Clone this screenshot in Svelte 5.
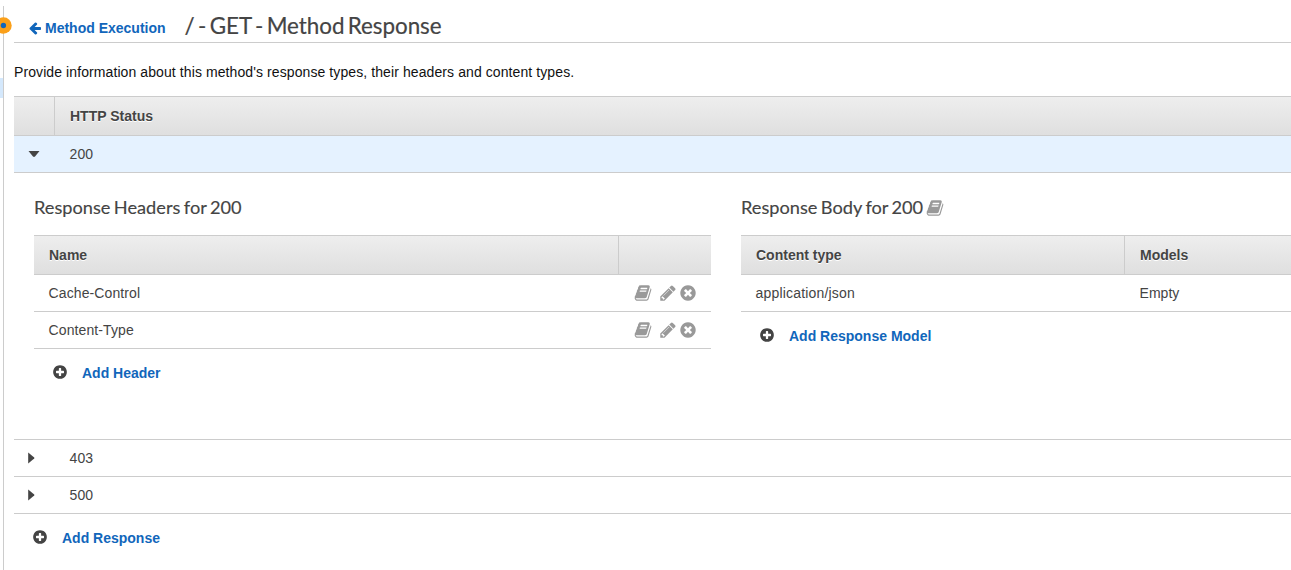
<script>
  const paths = {
    arrow: 'M1664 896v128q0 53-32.5 90.5t-84.5 37.5h-704l293 294q38 36 38 90t-38 90l-75 76q-37 37-90 37-52 0-91-37l-651-652q-37-37-37-90 0-52 37-91l651-650q38-38 91-38 52 0 90 38l75 74q38 38 38 91t-38 91l-293 293h704q52 0 84.5 37.5t32.5 90.5z',
    plus: 'M1344 960v-128q0-26-19-45t-45-19h-256v-256q0-26-19-45t-45-19h-128q-26 0-45 19t-19 45v256h-256q-26 0-45 19t-19 45v128q0 26 19 45t45 19h256v256q0 26 19 45t45 19h128q26 0 45-19t19-45v-256h256q26 0 45-19t19-45zm320-64q0 209-103 385.5t-279.5 279.5-385.5 103-385.5-103-279.5-279.5-103-385.5 103-385.5 279.5-279.5 385.5-103 385.5 103 279.5 279.5 103 385.5z',
    times: 'M1277 1122q0-26-19-45l-181-181 181-181q19-19 19-45 0-27-19-46l-90-90q-19-19-46-19-26 0-45 19l-181 181-181-181q-19-19-45-19-27 0-46 19l-90 90q-19 19-19 46 0 26 19 45l181 181-181 181q-19 19-19 45 0 27 19 46l90 90q19 19 46 19 26 0 45-19l181-181 181 181q19 19 45 19 27 0 46-19l90-90q19-19 19-46zm387-226q0 209-103 385.5t-279.5 279.5-385.5 103-385.5-103-279.5-279.5-103-385.5 103-385.5 279.5-279.5 385.5-103 385.5 103 279.5 279.5 103 385.5z',
    book: 'M1703 478q40 57 18 129l-275 906q-19 64-76.5 107.5t-122.5 43.5h-923q-77 0-148.5-53.5t-99.5-131.5q-24-67-2-127 0-4 3-27t4-37q1-8-3-21.5t-3-19.5q2-11 8-21t16.5-23.5 16.5-23.5q23-38 45-91.5t30-91.5q3-10 .5-30t-.5-28q3-11 17-28t17-23q21-36 42-92t25-90q1-9-2.5-32t.5-28q4-13 22-30.5t22-22.5q19-26 42.5-84.5t27.5-96.5q1-8-3-25.5t-2-26.5q2-8 9-18t18-23 17-21q8-12 16.5-30.5t15-35 16-36 19.5-32 26.5-23.5 36-11.5 47.5 5.5l-1 3q38-9 51-9h761q74 0 114 56t18 130l-274 906q-36 119-71.5 153.5t-128.5 34.5h-869q-27 0-38 15-11 16-1 43 24 70 144 70h923q29 0 56-15.5t35-41.5l300-987q7-22 5-57 38 15 59 43zm-1064 2q-4 13 2 22.5t20 9.5h608q13 0 25.5-9.5t16.5-22.5l21-64q4-13-2-22.5t-20-9.5h-608q-13 0-25.5 9.5t-16.5 22.5zm-83 256q-4 13 2 22.5t20 9.5h608q13 0 25.5-9.5t16.5-22.5l21-64q4-13-2-22.5t-20-9.5h-608q-13 0-25.5 9.5t-16.5 22.5z',
    pencil: 'M491 1536l91-91-235-235-91 91v107h128v128h107zm523-928q0-22-22-22-10 0-17 7l-542 542q-7 7-7 17 0 22 22 22 10 0 17-7l542-542q7-7 7-17zm-54-192l416 416-832 832h-416v-416zm683 96q0 53-37 90l-166 166-416-416 166-165q36-38 90-38 53 0 91 38l235 234q37 39 37 91z'
  };
  const headers = ['Cache-Control', 'Content-Type'];
  const collapsed = ['403', '500'];
</script>

{#snippet icon(name, size)}
  <svg class="icon {name}" width={size} height={size} viewBox="0 0 1792 1792"><path d={paths[name]} /></svg>
{/snippet}

{#snippet add(label)}
  <div class="add">{@render icon('plus', 16)}<a>{label}</a></div>
{/snippet}

<div class="page">
  <aside>
    <span class="selection"></span>
    <svg class="handle" width="14" height="20" viewBox="0 0 14 20">
      <circle cx="3.4" cy="9.5" r="8.3" fill="#fba019" />
      <circle cx="3.4" cy="9.5" r="2.7" fill="#1166bb" />
    </svg>
  </aside>
  <main>
    <header>
      <a class="back">{@render icon('arrow', 14)}<span>Method Execution</span></a>
      <h1>/ - GET - Method Response</h1>
    </header>
    <p>Provide information about this method's response types, their headers and content types.</p>

    <section class="statuses">
      <div class="row head"><div class="toggle"></div><div class="cell status">HTTP Status</div></div>
      <div class="row open">
        <div class="toggle"><svg width="12" height="6" viewBox="0 0 12 6"><path d="M0.5 0h11L7 5.5Q6 6.3 5 5.5z" /></svg></div>
        <div class="cell">200</div>
      </div>
      <div class="detail">
        <div class="left">
          <h2>Response Headers for 200</h2>
          <div class="row head"><div class="cell name">Name</div><div class="actions"></div></div>
          {#each headers as h}
            <div class="row">
              <div class="cell name">{h}</div>
              <div class="actions">
                {@render icon('book', 18)}{@render icon('pencil', 18)}{@render icon('times', 18)}
              </div>
            </div>
          {/each}
          {@render add('Add Header')}
        </div>
        <div class="right">
          <h2><span>Response Body for 200</span>{@render icon('book', 18)}</h2>
          <div class="row head"><div class="cell type">Content type</div><div class="cell model">Models</div></div>
          <div class="row"><div class="cell type">application/json</div><div class="cell model">Empty</div></div>
          {@render add('Add Response Model')}
        </div>
      </div>
      {#each collapsed as code}
        <div class="row">
          <div class="toggle"><svg width="7" height="12" viewBox="0 0 7 12"><path d="M0.2 0.4L6.2 5.4Q6.7 6 6.2 6.6L0.2 11.6z" /></svg></div>
          <div class="cell">{code}</div>
        </div>
      {/each}
      {@render add('Add Response')}
    </section>
  </main>
</div>

<style>
  :global(body) { background: #fff; overflow: hidden; }
  .page {
    display: flex;
    height: 570px;
    overflow: hidden;
    color: #444;
    font: 14px/20px "Liberation Sans", Arial, sans-serif;
  }
  aside {
    position: relative;
    box-sizing: border-box;
    flex: none;
    width: 4px;
    margin-top: 6px;
    border-right: 1px solid #ccc;
  }
  .selection { display: block; width: 3px; height: 20px; margin-top: 72px; background: #d4e8fc; }
  .handle { position: absolute; left: 0; top: 10px; }
  main { flex: 1; min-width: 0; padding-left: 10px; }
  svg { display: block; flex: none; fill: #444; }
  header {
    box-sizing: border-box;
    display: flex;
    height: 43px;
    padding-left: 14px;
    border-bottom: 1px solid #ccc;
  }
  a { color: #1166bb; font-weight: bold; white-space: nowrap; }
  .back { display: flex; width: 156.5px; padding-top: 18px; gap: 3px; }
  .back .icon { fill: #1166bb; margin-top: 3px; }
  h1, h2 { margin: 0; color: #444; font-family: Lato, sans-serif; font-weight: 400; white-space: nowrap; }
  h1 { font-size: 22.4px; line-height: 28px; padding-top: 12px; word-spacing: -2.2px; letter-spacing: -0.05px; -webkit-text-stroke: 0.2px #444; }
  p { margin: 0; padding: 19px 0 14px; color: #111; letter-spacing: 0.092px; white-space: nowrap; }
  .row {
    box-sizing: border-box;
    display: flex;
    height: 37px;
    align-items: stretch;
    line-height: 36px;
    border-bottom: 1px solid #ccc;
  }
  .head {
    height: 40px;
    line-height: 38px;
    font-weight: bold;
    border-top: 1px solid #ccc;
    background: linear-gradient(#eee, #dfdfdf);
    text-shadow: 0 1px 0 #fff;
  }
  .open { background: #e5f2ff; }
  .toggle { box-sizing: border-box; display: flex; width: 41px; align-items: center; padding-left: 14px; border-right: 1px solid transparent; }
  .head .toggle { border-color: #ccc; }
  .cell { padding-left: 15px; white-space: nowrap; }
  .row:not(.head) .cell { padding-left: 14.6px; }
  .detail { box-sizing: border-box; display: flex; gap: 30px; height: 267px; padding: 22px 0 0 20px; border-bottom: 1px solid #ccc; }
  .left { flex: none; width: 677px; }
  .right { flex: 1; }
  h2 { display: flex; height: 40px; font-size: 18.2px; line-height: 25px; word-spacing: -1.2px; -webkit-text-stroke: 0.15px #444; }
  h2 .icon { margin: 3.5px 0 0 3px; }
  .book, .pencil, .times { fill: #999; }
  .name { flex: 1; }
  .row:not(.head) .name { letter-spacing: 0.1px; }
  .row:not(.head) .type { letter-spacing: 0.18px; }
  .actions { box-sizing: border-box; display: flex; width: 93px; align-items: center; padding: 0 0 1px 14.5px; border-left: 1px solid transparent; }
  .head .actions { border-color: #ccc; }
  .actions .pencil { margin: 0 2px 0 7px; }
  .type { box-sizing: border-box; width: 383px; }
  .model { border-left: 1px solid transparent; }
  .head .model { border-color: #ccc; }
  .add { display: flex; gap: 14.4px; padding: 14px 0 0 17.6px; }
  .add .icon { margin-top: 1.4px; }
</style>
